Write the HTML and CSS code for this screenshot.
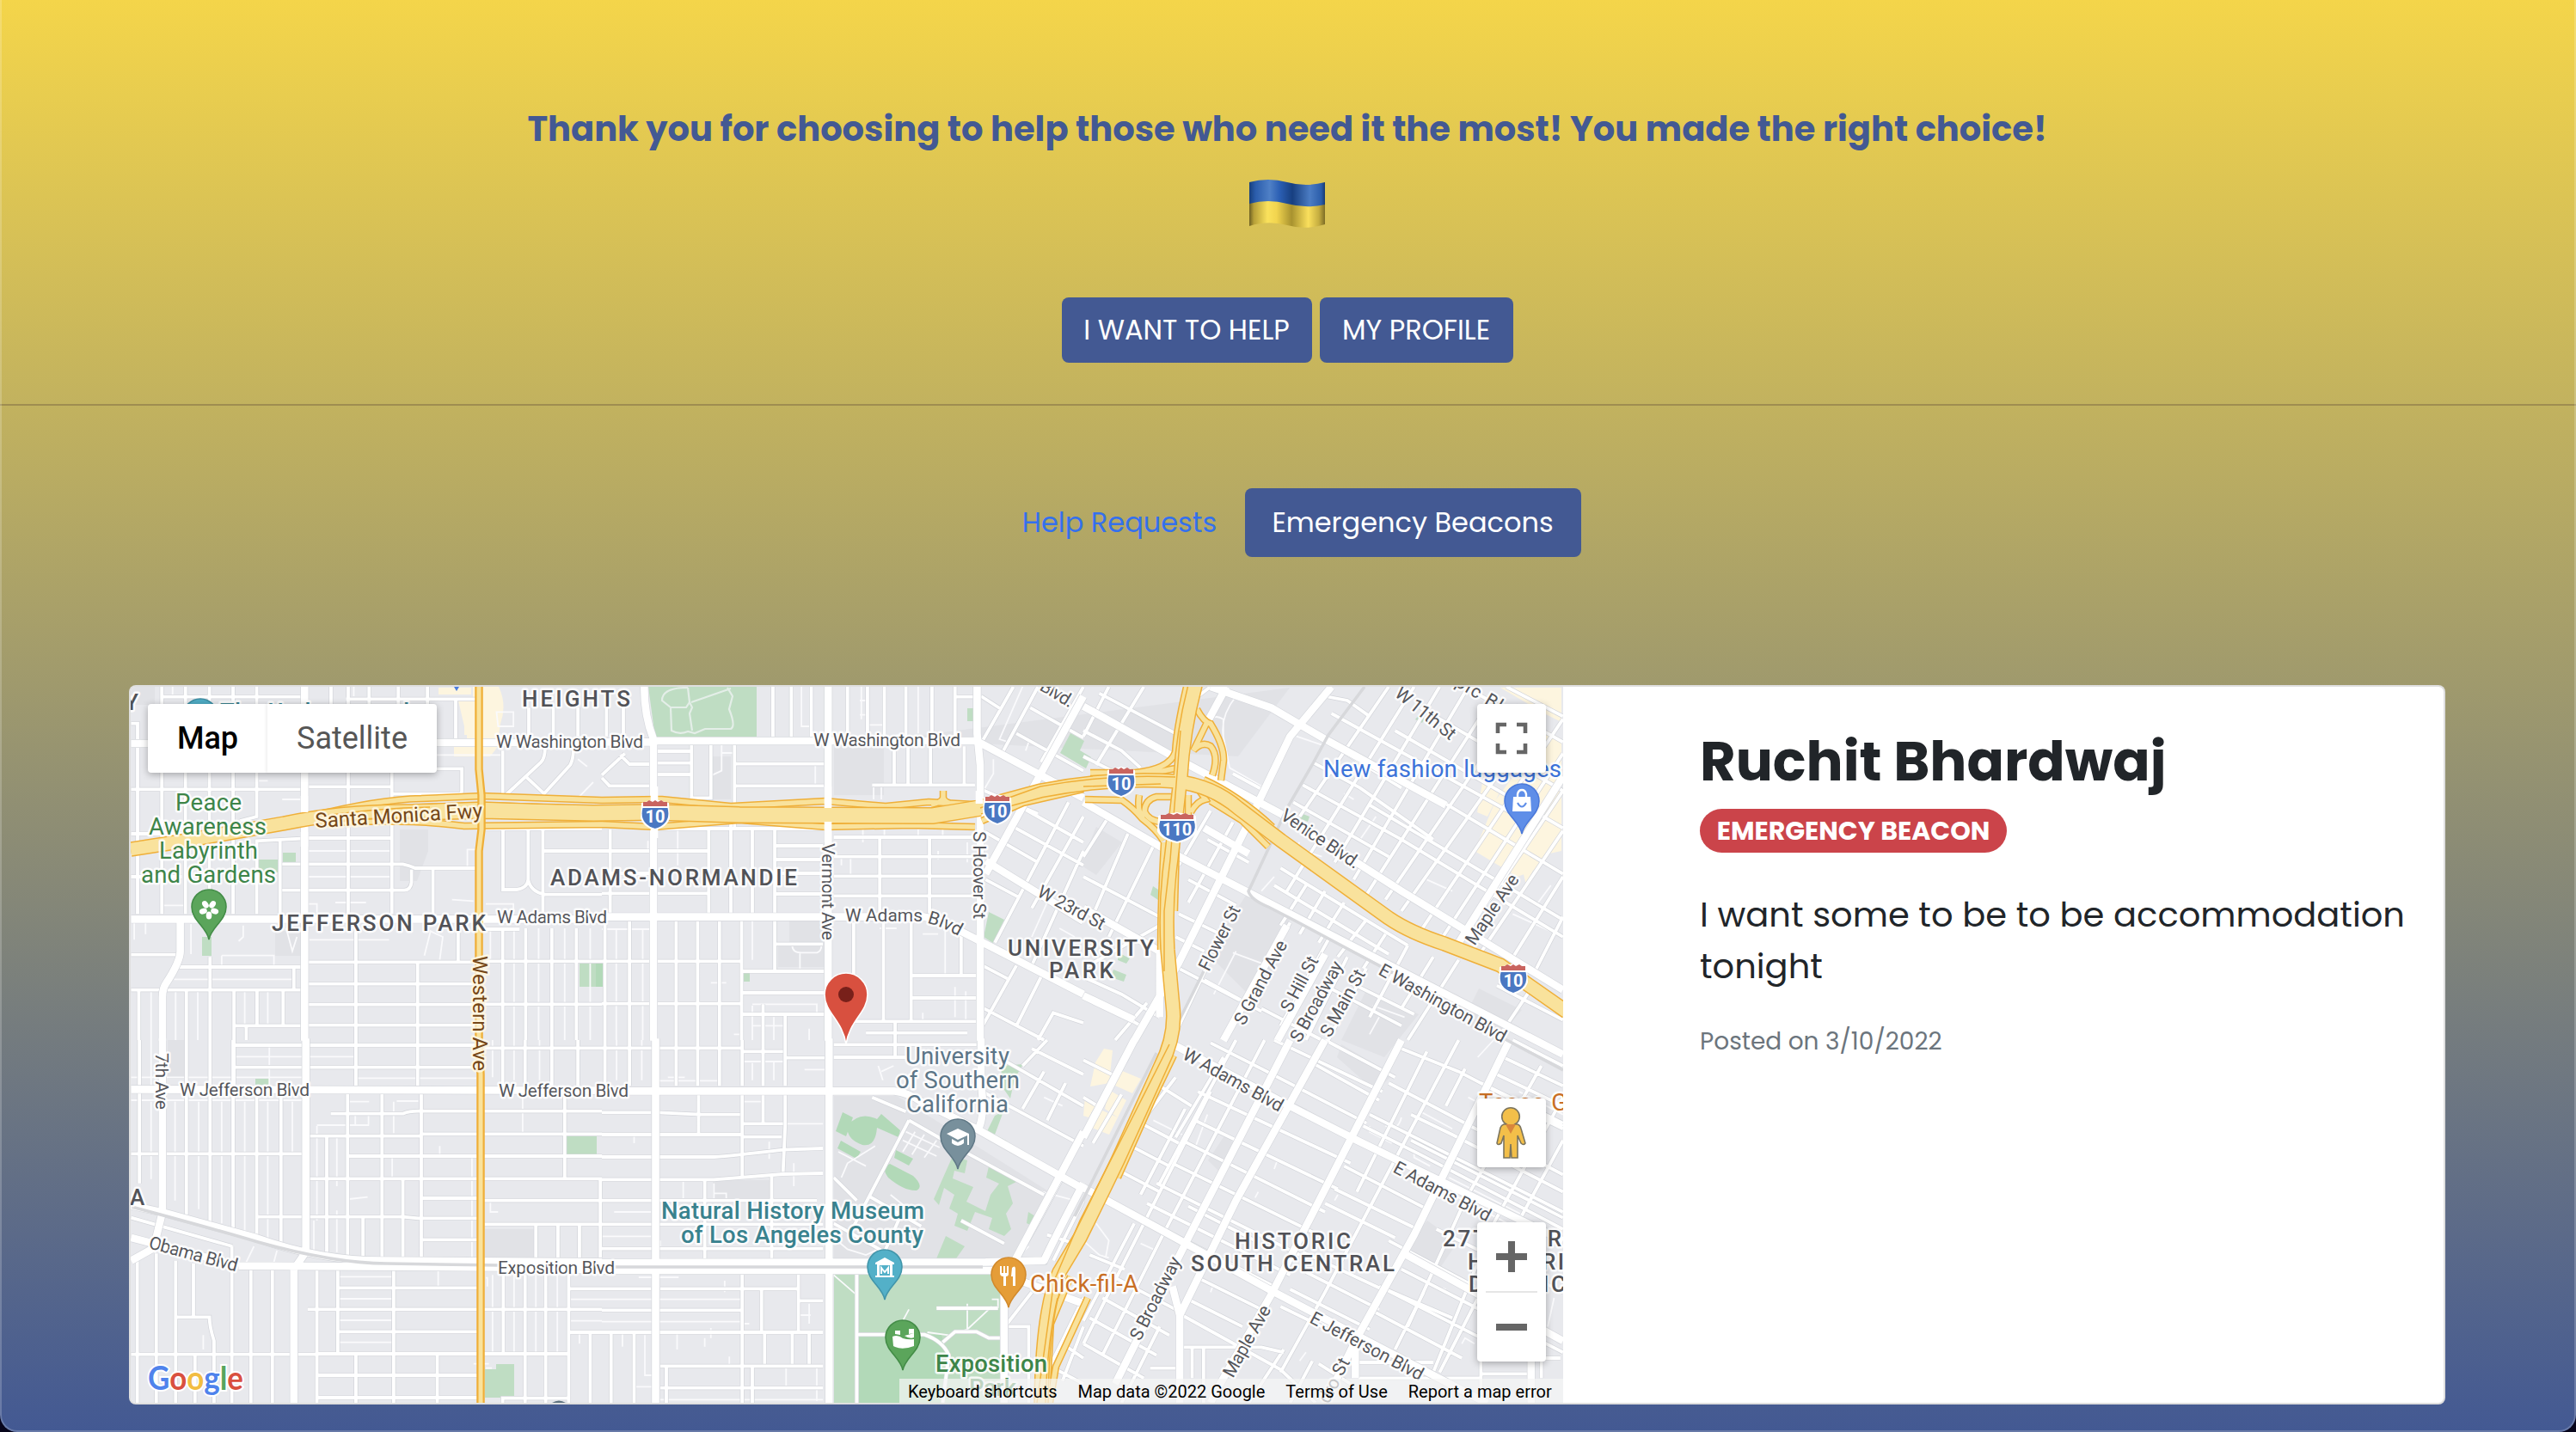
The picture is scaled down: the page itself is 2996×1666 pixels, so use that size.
FILE: index.html
```html
<!DOCTYPE html>
<html lang="en">
<head>
<meta charset="utf-8">
<title>Emergency Beacons</title>
<link rel="stylesheet" href="styles.css">
</head>
<body>
<main class="page">
  <header class="intro">
    <h1 class="thanks">Thank you for choosing to help those who need it the most! You made the right choice!</h1>
    <svg class="flag" viewBox="0 0 88 58" aria-label="Ukraine">
      <defs>
        <linearGradient id="blue"><stop offset="0" stop-color="#173f7c"/><stop offset=".08" stop-color="#2a5cab"/><stop offset=".27" stop-color="#4f80c6"/><stop offset=".4" stop-color="#2b5fb4"/><stop offset=".57" stop-color="#173f80"/><stop offset=".8" stop-color="#4b7cc3"/><stop offset=".95" stop-color="#2b5daa"/><stop offset="1" stop-color="#173a72"/></linearGradient>
        <linearGradient id="gold"><stop offset="0" stop-color="#6d5f22"/><stop offset=".06" stop-color="#b69f38"/><stop offset=".24" stop-color="#fae15c"/><stop offset=".36" stop-color="#f2d54f"/><stop offset=".56" stop-color="#a8922f"/><stop offset=".78" stop-color="#fadf5c"/><stop offset=".92" stop-color="#c5ad40"/><stop offset="1" stop-color="#7c6c26"/></linearGradient>
      </defs>
      <path fill="url(#gold)" d="M0 26Q22 20 44 27T88 28V52Q66 59 44 53T0 54Z"/>
      <path fill="url(#blue)" d="M0 3Q22-3 44 3T88 3V29Q66 34 44 28T0 28Z"/>
    </svg>
    <div class="actions">
      <a class="btn">I WANT TO HELP</a>
      <a class="btn btn-profile">MY PROFILE</a>
    </div>
  </header>
  <hr class="rule">
  <nav class="pills">
    <a class="pill">Help Requests</a>
    <a class="pill active">Emergency Beacons</a>
  </nav>
  <article class="card">
    <div class="map">
      <svg class="map-canvas" viewBox="152 799 1666 833">
        <defs>
          <g id="minor">
            <g transform="translate(140 790) scale(.35714 .33333)">
              <path d="M35 155H56V820M135 27V820M212 27V820M290 27V820M367 27V820M444 27V480L390 495M444 560V820M686 27V90M742 27V820M810 27V90M905 27V90M1000 27V90M884 320V820M135 62H600M735 70H1165M1092 70V210M35 385H600M610 376H885M885 401H1105Q1112 400 1112 390V313H1030M35 540H200M35 690H200M440 565L600 556M613 555H880M527 646H920Q940 650 960 660H1160M948 665V710Q945 735 925 737H527M520 565V820M1018 665V820M35 962H190M190 1005H600M565 1005V1085M35 1085H600M292 970V1260M60 1090V1260M215 1090V1260M370 1090V1260M445 1090V1210M530 1090V1210M375 1210H590M410 1210V1260M613 988H1160M613 1064H1160M613 1136H1160M613 1208H1160M767 880V1260M968 990V1260M1245 250V405H1255L1370 290Q1383 275 1383 240M1320 340L1380 400 1465 300Q1475 280 1475 250M1330 100V200M1410 100V200M1490 100V200M1185 523H1568M1246 525V735H1290Q1325 730 1328 700Q1335 740 1380 752H1568M1328 510V700M1376 525V830M1380 600H1568M1245 870V1260M1320 870V1260M1405 870V1260M1485 870V1260M1185 985H1568M1185 1135H1568M1185 873H1300M1100 870V985"/>
            </g>
            <g transform="translate(700 790) scale(.35714 .33333)">
              <path d="M70 100V200M15 100V200M557 27V205M617 27V205M682 27V205M800 27V205M865 27V205M920 27V205M990 27V205M1075 27V205M1150 27V205M1150 62H1215M180 252H290M180 293H290M180 333H290M292 230V415H355V230M432 230V520M435 296H725M435 373H725M20 373H160M0 345L25 373M0 335L75 260M60 265 90 297H160M952 240V370M997 235V370M1070 235V370M1180 235V370M880 370H1215M180 522H720M755 552H1215M565 582H720M565 630H720M755 620H1215M755 688H1215M755 757H1215M27 525V820M348 525V820M420 490V820M490 525V820M563 525V1015M0 600H345M0 678H160M0 748H345M565 678H720M565 750H720M905 555V825M1067 550V825M10 845V1260M90 845V1260M242 845V1260M312 845V1260M383 845V1260M0 985H455M0 1133H455M455 840V1260M565 925H720M460 1020H725M460 1095H725M460 1170H725M525 1135V1260M597 1175V1260M820 850V1040M917 850V1190M1007 850V1190M1010 1035H1220M1010 1113H1220M820 1195H1220M1170 880V1030M955 1200V1260M860 1235H1190M1235 60 1300 105M1340 27 1240 215M1420 27 1300 265M1395 100 1568 205M1350 190 1568 320M1370 450 1568 570M1330 510 1568 650M1250 535 1420 640M1520 430 1280 920M1568 480 1400 800M1250 700 1355 760M1568 600 1400 1000M1240 1000 1320 1045M1350 1000 1240 1210M1430 1040 1350 1210M1245 1150 1440 1260M1568 1200 1470 1165 1420 1260M1568 27 1430 290M1235 385 1420 470"/>
            </g>
            <g transform="translate(1260 790) scale(.36990 .33333)">
              <path d="M80 27 0 200M190 27 40 300M0 180 120 250 180 310M50 50 290 190M0 270 90 320M400 27 300 110M760 60 830 75 900 130M780 120 1400 500M740 200 1000 380M720 290 870 380 1100 560M690 370 1000 560 1508 900M660 430 960 620M980 180 1508 520M1060 100 1508 390M1200 27 1508 220M1330 27 1508 130M1010 350 1508 680M900 440 1508 840M960 27 680 480M1040 27 640 740M1120 27 790 640M1210 27 850 700M1290 60 880 770M1370 90 950 770M1440 120 1000 810M1508 140 1060 880M1508 260 1130 900M1508 390 1180 930M1508 530 1240 970M1508 690 1340 990M1508 830 1420 1020M470 330 570 390M0 690 240 830M80 480 0 620M140 540 20 850M230 560 80 900M0 1010 240 860M300 600 240 720M400 460 300 650M470 500 330 780M390 560 520 640M330 700 480 790M300 820 430 890M290 900 380 950M380 1050 560 1160M300 1010 490 1120M390 1000 280 1260M650 850 540 1070M700 720 620 860M760 740 680 890M820 780 740 920M890 840 800 970M950 890 880 1010M1020 930 900 1180M1100 970 1000 1150M620 660 1020 930M600 720 960 960M770 910 620 1210M830 970 700 1260M890 1010 770 1260M1180 980 1020 1260M560 1150 750 1260M760 1070 1000 1210M1300 1070 1508 1190M1420 1060 1300 1260M0 1040 120 1100 240 1180M40 1120 180 1210M200 1130 100 1260M840 1060 1040 1170"/>
            </g>
            <g transform="translate(140 1210) scale(.35714 .33333)">
              <path d="M35 620 365 720M62 0V500M215 0V610M292 0V635M367 0V665M444 190V685M523 190V705M35 397H600M375 95H1160M375 18H1160M767 0V160M968 0V160M370 0V160M685 257H920Q940 248 970 248H1568M615 335H975M980 328H1568M745 405H1568M615 484H1568M445 617H920L970 622H1165M980 697H1165M980 552H1165M740 185V755M852 185V760M980 185V760M920 490V760M672 340V745M790 620V760M1185 560H1560M1185 643H1560M1447 185V480M1353 645V760M1425 645V760M1495 645V760M1563 490V760M1185 28H1568M1245 0V160M1318 0V160M1405 0V160M1490 0V160M55 770V1266M117 745V1266M180 770V1266M238 780V967M180 967H290Q290 1000 305 1050V1266M363 720V1266M425 800V1266M495 800V1266M243 1100V1266M35 1097H640M640 800V1266M708 800V1090M890 800V1266M710 865H1165M610 940H1568M710 1018H1165M645 1095H1460M645 1170H1165M645 1248H1165M767 1095V1266M1032 1095V1266M1247 820V1095M1318 820V1266M1385 820V1266M1460 810V1266M1465 868H1568M1465 1020H1568M1530 1020V1266M1245 1266V1250H1460"/>
            </g>
            <g transform="translate(700 1210) scale(.35714 .33333)">
              <path d="M0 28H455M90 0V160M10 0V160M242 0V160M312 0V160M383 0V160M457 0V160M525 0V160M597 0V160M460 40H590M600 62H725M755 16H1220M755 60H1000M955 0V60M0 253H160M185 253 320 260H450M0 330H455M0 408H365Q420 405 590 383L720 378M0 487H365L590 468 720 465M315 190V325M457 190V475M525 190V290M460 292H590M597 190V300L590 460M460 338H585M0 560H700M335 487V770M553 475V770M0 643H720M0 728H720M457 810V1266M0 868H160M190 868H635M0 943H455M0 1020H720M640 810V1020M520 870V1020M640 910H720M30 1020V1266M105 1020V1266M190 1138H720M190 1214H720M530 1020V1130M620 1020V1130M675 1020V1130M210 1140V1266M490 1140V1266M1260 40 1568 230M1450 0 1370 90M1440 110 1370 240M1510 150 1450 280M1240 180 1568 370M1000 280 820 650M830 560 755 480M870 545 1040 650M1000 280 1130 360M1190 395 1440 540M1500 480 1430 620 1350 770M755 640 920 740M970 620 920 740M830 810V1266M835 1028H1050Q1110 1050 1130 1100L1110 1266M1090 936H1290M1110 1055 1150 1018H1220L1260 1040H1300M1325 1000H1390V1266M1400 880 1320 990M1450 680 1568 720M1568 560 1470 770M1568 900 1440 1180M1170 630 1310 710M1500 1060 1568 1110M1480 1150 1568 1200M1568 1000 1500 1190M1400 30 1568 120M880 200 990 250"/>
            </g>
            <g transform="translate(1260 1210) scale(.36990 .33333)">
              <path d="M290 130 180 290M240 160 340 230M180 290 300 360M150 370 270 440M120 460 240 530M320 240 180 540M400 180 90 860 0 1060M440 60 290 340M480 0 240 500M570 0 250 680 60 1100M0 70 90 120M0 200 60 240M140 60 30 260M120 190 30 360M400 10 560 100 890 290M430 100 700 250M360 180 840 430M350 280 800 520M310 350 760 600M280 430 720 670M230 500 680 750M200 570 650 820M600 0 940 180M720 80 930 210M760 0 980 130M1000 30 1180 110 1508 300M960 150 1508 470M900 260 1508 600M880 300 1060 400 1508 660M1030 260 1160 330 1508 530M1030 350 1508 620M820 440 1080 590M790 520 1050 660M760 570 980 690M1180 0 950 480 760 880 620 1160M1080 40 860 530M1440 90 1200 560 1020 1000M1508 200 1290 640 1100 1160M1508 350 1370 630M1200 100 1140 230M1250 150 1508 290M1110 660 1508 880M1000 800 1508 1090M960 700 1230 860M950 870 1250 1040M900 940 1190 1110M930 860 1160 970M1250 880 1120 1160M1070 880 980 1080M700 810 930 940M650 870 900 1010M620 930 860 1060M690 740 940 870M360 830 560 940M320 900 500 1000M310 960 620 1150 730 1266M100 830 290 940M60 900 270 1030M20 970 230 1100M0 1060 190 1180M160 640 0 980M20 750 130 800M330 580 540 700M180 620 600 860M240 1000 120 1266M315 1072H560L630 1090M342 1075V1180M378 1075V1266M210 1145H300M630 1080 520 1266M720 1120 650 1266M740 1130 840 1200M865 1125H1100M865 1180H1250M1250 1120V1266M1250 1165H1400M1440 1120V1180M1500 1110H1400M1350 0 1508 90M1320 60 1508 160M1300 120 1508 230M1270 180 1508 310"/>
            </g>
          </g>
          <g id="lanes">
            <g transform="translate(140 790) scale(.35714 .33333)">
              <path d="M170 27V60M760 27V60M613 600H880M613 690H880M615 910H875M527 420H590M140 790H210M330 965H500V1000M330 965V1000M175 1048H565M100 1090V1260M180 1090V1260M252 1090V1260M405 1090V1210M480 1090V1210M1160 595H1130V655M1225 115H1280V165H1230ZM1245 265H1030M1490 415 1540 360M1190 785H1280V820M1080 770 1150 775M700 780H800M610 785H640V815M1205 870V985M1282 870V1260M1362 870V1260M1447 870V1260M1530 870V1260M1490 280 1520 305M45 850V910M82 850V890M230 855V960M400 860V900L385 915M540 870 560 950 575 900M990 965 1010 880 1050 900 1040 980M450 355H480"/>
            </g>
            <g transform="translate(700 790) scale(.35714 .33333)">
              <path d="M650 27V165H680M845 27V140M840 75H860M840 125H860M865 160H920M1030 27V190M390 230V320L360 335M390 258H430M247 525V650M150 565V600M695 300V365M885 375V420M910 375V420M850 525V570M920 525V550M1030 525V550M1110 525V550M810 625V680M780 625V650M1190 570V640M1095 600V630M47 870V1260M133 870V1260M0 873H160M355 1060H405M382 1040V1080M490 840V980M620 930Q620 955 650 955H700Q715 950 715 930M645 955V1010M1118 880V1030M905 870H960M1045 890H1095M490 1135H700V1165M490 1140V1260M560 1180V1260M490 1210H590M430 1240H450M675 1220V1260M1150 1075V1180M1185 1090V1190M1045 1165V1200M1370 27 1295 210 1325 220M1275 280V330L1245 385M1380 250 1390 220M1450 780 1400 900M1490 870 1540 900"/>
            </g>
            <g transform="translate(1260 790) scale(.36990 .33333)">
              <path d="M400 150Q410 120 440 140V200M480 60Q430 130 440 200L460 310 570 380M750 230 670 200M820 400 850 420M920 480 870 560M680 570Q660 590 750 620M1160 740 1080 700M1470 720 1430 780M480 950 410 1100M470 955 580 1000M910 1140 1010 1180M930 1180 900 1240M560 740 600 690M1350 820 1508 900M1100 900 1130 890"/>
            </g>
            <g transform="translate(140 1210) scale(.35714 .33333)">
              <path d="M35 130H600M35 210H600M100 0V160M100 215V485M178 215V560M255 215V590M330 215V640M405 215V665M480 215V690M560 215V400M375 58H760M485 25V160M630 630V740M705 340V510M705 595V740M640 300V630M640 297H810M765 260V295M808 260V295M740 215H810M890 215V325M900 213H970M885 410V480M770 133H1160M745 555 805 548M1145 410V760M1205 565V600H1230M1310 185V325M1212 0V130M1282 0V140M1365 0V140M1040 370V400M435 720 410 775M510 735 500 775M710 826H885M710 903H885M710 978H885M710 1055H885M1035 800V860M1212 820V1100M1282 820V1095M1353 820V1095M1423 820V1095M1190 830H1195V860M270 1030V1080M1465 905H1568M1465 980H1568M1495 1025V1060M1150 1130H1200M1190 1145H1210"/>
            </g>
            <g transform="translate(700 1210) scale(.35714 .33333)">
              <path d="M48 0V140M130 0V140M185 142H380M215 130H270M490 80V140M560 75V140M460 75H590M660 103H725M595 292H720M460 215H525M545 355V415M625 430V510M265 490V560M105 330V360M40 600H160M0 685H160M365 500V560M365 535H405V560M545 600H680M190 700V725M120 828H250M400 840V880M0 905H455M0 983H455M67 1025V1070M140 1030V1170H165M245 1025V1080M355 1005V1040M335 1040V1070M415 1105V1135M675 920V990M645 960H680M450 990H480M105 1210H165V1180M700 1140V1260M770 390 860 440M890 370 800 430 780 480M1020 320 980 390M1050 330 1010 400M1090 350 1050 410M990 320 1100 375M980 350 1090 405M940 540 1010 600M755 690 800 730 860 750 900 730M980 980 1000 940M1060 1020 1130 1030 1190 1010M1190 920V1010L1270 930M1270 905H1290V935M910 110 950 90M900 90 915 140M1440 200 1500 230M1540 560 1400 520M1390 720 1350 760M1420 840 1490 870M755 820 830 890M190 1255H720M600 1140V1210"/>
            </g>
            <g transform="translate(1260 1210) scale(.36990 .33333)">
              <path d="M390 260 350 380M220 280 310 330M1060 250 1160 310M1000 270Q990 320 950 300M900 300V320L970 360M1040 380V410L1090 440M1240 60 1290 0M1370 180 1508 260M1210 200 1330 270M1180 440 1400 560M1150 480 1380 610M1130 520 1350 650M1220 490V510M550 530 540 550M610 420 600 450M800 540 790 560M40 640 80 700 70 760M0 700 50 750 80 760M180 710 220 730M410 850 400 880M700 1090 680 1120M1190 1060 1200 1040 1230 1060M1480 900 1460 1000M1100 860 1140 870M740 980 830 1030"/>
            </g>
          </g>
          <g id="major">
            <g transform="translate(140 790) scale(.35714 .33333)">
              <path d="M600 27V1262M35 225H100M1020 222H1568M35 838H1568M195 850V950Q195 985 150 1060Q137 1080 137 1110V1262"/>
            </g>
            <g transform="translate(700 790) scale(.35714 .33333)">
              <path d="M0 220H165M138 27Q138 130 168 210V1262M737 27V1262M1222 27V190L1232 300V1262M165 216H1220L1568 415M0 830H1050Q1110 840 1150 870L1568 1100M1568 60 1250 680M1250 635 1568 845"/>
            </g>
            <g transform="translate(1260 790) scale(.36990 .33333)">
              <path d="M0 95 290 275 620 470 1000 740 1508 1085M0 430 250 590 510 740 1000 1020 1508 1310M400 27 590 100 760 210 1140 440M780 27 650 200 520 500 300 990 160 1262M450 27 390 150M0 800 240 950V1180M0 1105 160 1190M1508 340 1180 920M760 960 610 1262M640 860 440 1262M380 520 520 610"/>
            </g>
            <g transform="translate(140 1210) scale(.35714 .33333)">
              <path d="M35 172 1568 176M137-5V600L105 740M604-5V740L565 800V1268M35 577 140 602 440 690Q650 770 850 770L1568 775M385 788 1230 793 1568 803M35 690 180 730 385 788M35 770 110 725"/>
            </g>
            <g transform="translate(700 1210) scale(.35714 .33333)">
              <path d="M175-5V1268M740-5V1268M0 178H950Q1000 185 1040 215L1220 310 1568 520M1235-5V150Q1250 280 1220 320M1568 320 1320 820 1310 890V1268M0 777 1250 775 1440 770Q1470 700 1568 500M0 804H1270L1568 920"/>
            </g>
            <g transform="translate(1260 1210) scale(.36990 .33333)">
              <path d="M290 20 640 225 860 350 1508 700M0 515 240 660 600 880 1100 1170 1270 1268M1000 0 700 650 590 890 430 1200 400 1266M1340 0 1040 680 860 1040 760 1266M760 0 480 560 303 960V1268M650 0 330 690 100 1200M1000 740 1508 1050M303 960 280 860M855 1050V1180M1408 1120V1268M0 340 160 0"/>
            </g>
          </g>
          <g id="freeway">
            <path d="M152 988 210 979 330 958Q400 943 480 944L561 941 690 946 760 945 860 948 1085 949 1140 939 1210 920Q1290 904 1367 909Q1410 914 1440 940L1490 978 1615 1068Q1640 1085 1680 1098L1745 1123 1822 1177"/>
            <path d="M1391 794Q1376 850 1373 905L1362 1000Q1355 1050 1358 1105L1364 1170Q1368 1205 1350 1240L1300 1350Q1276 1400 1256 1440L1232 1480Q1212 1525 1211 1634"/>
          </g>
          <path id="freeway-core" d="M480 945 561 943 690 946 760 945 860 948 1085 949 1140 940"/>
          <g id="ramps">
            <path d="M360 950Q440 930 490 929L561 926 700 931 770 930 850 938 960 932 1030 938 1080 933 1134 936M380 958Q470 952 540 961L700 959 762 962 860 954 960 962 1060 960 1134 962M1142 955 1190 934 1260 918M1097 920V928Q1095 934 1083 936M1097 928Q1098 934 1112 936"/>
            <path d="M1392 825Q1400 840 1408 842Q1424 868 1423 885L1420 908M1405 838 1388 873Q1398 862 1408 868Q1418 880 1410 902M1380 799Q1368 850 1367 875Q1360 895 1320 899L1268 899M1375 893Q1350 896 1330 904M1262 930 1305 931Q1318 940 1328 952Q1345 965 1353 978M1362 927H1345Q1332 930 1331 944Q1336 955 1350 956M1325 925Q1322 945 1330 952M1385 945Q1392 932 1402 930L1395 920M1382 925V950M1400 907Q1440 925 1480 962M1408 932 1445 955 1475 985M1354 980Q1350 1050 1350 1105M1368 985 1366 1060M1640 1087 1700 1102 1740 1118M1365 1228 1340 1280 1322 1312M1340 1280 1300 1370M1265 1510 1228 1590 1221 1632M1245 1485 1222 1540 1217 1632"/>
          </g>
          <path id="pin" d="M0 0C-3-15-20-22-20-38A20 20 0 0 1 20-38C20-22 3-15 0 0Z"/>
          <g id="shield">
            <path fill="#fff" d="M-16-14 0-18 16-14 17 4Q14 14 0 18Q-14 14-17 4Z"/>
            <path fill="#4a78c2" d="M-14.5-8H14.5Q19 10 0 16Q-19 10-14.5-8Z"/>
            <path fill="#c9645f" d="M-14-10V-15L-10-15-7-17-3-15 0-17 3-15 7-17 10-15 14-15V-10Z"/>
          </g>
        </defs>

        <rect class="land" x="150" y="797" width="1670" height="837"/>
        <path class="block" d="M970 865H1028V925H970ZM1035 860 1500 800 1440 880ZM829 880H850V930H829ZM918 1070H960V1125H905V1100H918ZM970 1275H1043L1218 1385 1182 1467H970ZM1450 1040 1500 1070 1465 1170 1405 1110ZM564 1430H622V1465H564ZM829 1373H895V1395H829ZM465 965H498V990L485 1025H465ZM1590 1150 1650 1180 1610 1230 1560 1210ZM1560 1215 1620 1250 1600 1270 1555 1230ZM1720 1150 1770 1175 1740 1210 1700 1190ZM1660 1420 1695 1445 1675 1475 1635 1450ZM320 1083H350V1112H320ZM195 1210H217V1255H195ZM1425 1320 1440 1335 1420 1365 1405 1350ZM1275 962 1305 980 1275 1018 1256 1006ZM152 799H180V820H152Z"/>
        <path class="park" d="M754 799H880V858H762ZM1245 853 1261 862 1256 873 1269 881 1263 894 1233 876ZM1150 1061 1168 1070 1155 1097 1144 1090ZM300 1000H326V1015H300ZM329 992H344V1003H329ZM235 1090H246V1112H235ZM674 1120H704V1148H674ZM659 1322H694V1343H659ZM864 1132H872V1142H864ZM1125 824H1132V839H1125ZM297 1255H313V1262H297ZM564 1593H577V1587H598V1626H564ZM970 1482H1163V1632H970ZM1164 1240 1190 1238 1180 1255 1175 1278 1166 1265ZM1295 1128 1310 1134 1307 1142 1292 1137ZM1300 1108 1314 1115 1310 1121 1300 1117ZM1341 1031 1347 1035V1047L1338 1041ZM1513 946 1523 950 1521 956 1512 952ZM1650 832 1657 836 1654 841 1646 837ZM1100 1438 1122 1450 1110 1467H1088ZM1196 1410 1204 1415 1198 1425 1194 1423ZM1157 1298 1167 1293 1157 1320 1172 1328 1160 1324 1148 1316Z"/>
        <path class="park-dark" d="M980 1294 992 1300 984 1322 972 1316ZM985 1310Q1000 1292 1020 1302L1025 1296 1047 1315 1045 1323 1020 1312Q1018 1335 1003 1332Q985 1326 985 1310ZM978 1327 1001 1340 996 1348 974 1336ZM1042 1338 1062 1348 1057 1356 1040 1347ZM1035 1354 1062 1368Q1075 1380 1066 1385Q1052 1386 1033 1370Q1024 1358 1035 1354ZM998 1553H1095Q1110 1600 1095 1632H998ZM693 1120H704V1148H693Z"/>
        <path class="park" d="M1108 1345 1125 1350 1122 1365 1110 1362 1108 1371 1132 1381 1124 1398 1146 1409 1152 1390 1162 1377 1147 1370 1150 1357 1168 1364 1182 1375 1172 1380 1178 1400 1170 1412 1176 1430 1168 1438 1150 1430 1154 1417 1134 1410 1125 1432 1110 1426 1114 1412 1104 1406 1110 1390 1098 1382 1092 1402 1086 1395 1096 1372Z"/>
        <path class="shops" d="M510 800H548V808H510ZM533 815H550V799H580Q590 820 582 842L578 870 570 880H528V868H543V855H540V845ZM1745 800H1816V840L1796 830ZM1800 850 1816 860V960L1790 1010 1765 1020 1715 990 1740 930ZM1725 905 1745 920 1730 950 1718 945ZM1780 930 1816 870V990L1770 1000ZM1768 1000 1785 1008 1775 1030ZM1284 1220 1294 1222 1290 1260 1268 1264 1274 1236ZM1303 1245 1327 1255 1317 1272 1297 1263ZM1290 1268 1310 1280 1300 1300 1285 1290ZM1262 1275 1275 1285 1266 1300 1260 1298ZM1273 1288 1300 1300 1290 1320 1270 1312Z"/>

        <use href="#lanes" class="road lane"/>
        <use href="#minor" class="road casing"/>
        <use href="#minor" class="road street"/>
        <use href="#major" class="road casing-wide"/>
        <use href="#major" class="road avenue"/>
        <path class="park-path" d="M800 800Q770 800 770 815L780 823H798L802 817 805 823 802 830 805 850M780 823 781 850Q790 855 800 851L808 853 820 848H850Q856 845 848 825L852 810 846 800M802 817 800 800M804 817 850 801"/>
        <path class="rail" d="M1587 799 1545 855 1526 890 1497 940 1474 990 1452 1037Q1455 1047 1475 1055L1504 1070 1620 1132M1400 1130 1371 1188M1745 1206 1818 1245M153 1404Q250 1430 300 1445Q390 1470 450 1470L580 1472M715 1474H1143M1345 1225 1250 1415"/>
        <use href="#ramps" class="road ramp-edge"/>
        <use href="#ramps" class="road ramp-fill"/>
        <use href="#freeway" class="road freeway-edge"/>
        <use href="#freeway-core" class="road core-edge"/>
        <use href="#freeway" class="road freeway-fill"/>
        <use href="#freeway-core" class="road core-fill"/>
        <path class="road divider" d="M370 950Q440 940 500 939M370 957Q440 950 500 951M1140 940 1210 915Q1290 900 1367 904M1260 915 1350 912M1373 850 1361 1000 1354 1060 1354 1130M1360 1215 1312 1310 1256 1420 1226 1490 1206 1632M1230 1510Q1218 1560 1216 1632"/>
        <path class="road artery-edge" d="M557 799V895L560 925V965L557 990V1210L559 1250V1632"/>
        <path class="road artery-fill" d="M557 799V895L560 925V965L557 990V1210L559 1250V1632"/>
        <path class="road avenue" d="M761 915V934M761 961V975M963 915V940M963 956V980M354 926V945M1139 920V935M354 968V985"/>

        <g class="labels street-name">
          <text x="577" y="870" textLength="171">W Washington Blvd</text>
          <text x="946" y="868" textLength="171">W Washington Blvd</text>
          <text x="578" y="1074" textLength="128">W Adams Blvd</text>
          <path id="adams" fill="none" stroke="none" d="M983 1072H1068Q1090 1074 1120 1092"/>
          <text><textPath href="#adams">W Adams Blvd</textPath></text>
          <text x="209" y="1275" textLength="151">W Jefferson Blvd</text>
          <text x="580" y="1276" textLength="151">W Jefferson Blvd</text>
          <text x="579" y="1482" textLength="136">Exposition Blvd</text>
          <text transform="translate(172 1452) rotate(15)" textLength="106">Obama Blvd</text>
          <text transform="translate(956 981) rotate(90)" textLength="113">Vermont Ave</text>
          <text transform="translate(1132 967) rotate(90)" textLength="102">S Hoover St</text>
          <text transform="translate(181 1225) rotate(90)" textLength="66">7th Ave</text>
          <text transform="translate(1205 1042) rotate(28)" textLength="86">W 23rd St</text>
          <text transform="translate(1208 802) rotate(31)" textLength="42">Blvd.</text>
          <text transform="translate(1621 809) rotate(39)" textLength="84">W 11th St</text>
          <text transform="translate(1674 787) rotate(31)" textLength="80">mpic Bl</text>
          <text transform="translate(1488 952) rotate(34)" textLength="106">Venice Blvd.</text>
          <text transform="translate(1715 1101) rotate(-56)" textLength="94">Maple Ave</text>
          <text transform="translate(1406 1131) rotate(-63)" textLength="82">Flower St</text>
          <text transform="translate(1447 1194) rotate(-62)" textLength="108">S Grand Ave</text>
          <text transform="translate(1501 1179) rotate(-62)" textLength="70">S Hill St</text>
          <text transform="translate(1512 1214) rotate(-61)" textLength="104">S Broadway</text>
          <text transform="translate(1547 1208) rotate(-61)" textLength="86">S Main St</text>
          <text transform="translate(1602 1133) rotate(29)" textLength="166">E Washington Blvd</text>
          <text transform="translate(1374 1231) rotate(29)" textLength="130">W Adams Blvd</text>
          <text transform="translate(1619 1363) rotate(28)" textLength="125">E Adams Blvd</text>
          <text transform="translate(1522 1538) rotate(28)" textLength="146">E Jefferson Blvd</text>
          <text transform="translate(1326 1561) rotate(-63)" textLength="106">S Broadway</text>
          <text transform="translate(1434 1604) rotate(-61)" textLength="92">Maple Ave</text>
          <text transform="translate(1561 1602) rotate(-62)" textLength="20">St</text>
          <text transform="translate(1545 1634) rotate(-62)" textLength="30">dro</text>
        </g>
        <g class="labels highway-name">
          <text transform="translate(367 963) rotate(-3.5)" textLength="195">Santa Monica Fwy</text>
          <text transform="translate(550 1112) rotate(90)" textLength="134">Western Ave</text>
        </g>
        <g class="labels district">
          <text x="607" y="822" textLength="126">HEIGHTS</text>
          <text x="316" y="1083" textLength="249">JEFFERSON PARK</text>
          <text x="640" y="1030" textLength="287">ADAMS-NORMANDIE</text>
          <text x="1172" y="1112" textLength="170">UNIVERSITY</text>
          <text x="1220" y="1138" textLength="75">PARK</text>
          <text x="1436" y="1453" textLength="135">HISTORIC</text>
          <text x="1385" y="1479" textLength="237">SOUTH CENTRAL</text>
          <text x="1678" y="1450" textLength="138">27TH STR</text>
          <text x="1707" y="1477" textLength="112">HISTORI</text>
          <text x="1708" y="1503" textLength="113">DISTRIC</text>
          <text x="145" y="826">Y</text>
          <text x="151" y="1402">A</text>
        </g>
        <g class="labels poi">
          <g fill="#3d8549">
            <text x="204" y="943" textLength="77">Peace</text><text x="173" y="971" textLength="137">Awareness</text>
            <text x="185" y="999" textLength="115">Labyrinth</text><text x="164" y="1027" textLength="157">and Gardens</text>
            <text class="strong" x="1088" y="1596" textLength="130">Exposition</text><text class="strong" x="1127" y="1624" textLength="55">Park</text>
          </g>
          <g fill="#5c7587"><text x="1053" y="1238" textLength="121">University</text><text x="1042" y="1266" textLength="144">of Southern</text><text x="1054" y="1294" textLength="119">California</text></g>
          <g fill="#39828e" class="strong"><text x="769" y="1418" textLength="306">Natural History Museum</text><text x="792" y="1446" textLength="282">of Los Angeles County</text><text x="256" y="838" textLength="220">The Underground</text></g>
          <text fill="#3c73d9" x="1539" y="904" textLength="277">New fashion luggages</text>
          <text fill="#c96f24" x="1198" y="1503" textLength="126">Chick-fil-A</text>
          <text fill="#c96f24" x="1720" y="1292" textLength="103">Tacos G</text>
        </g>

        <g transform="translate(762 948)"><use href="#shield"/><text class="route" y="9">10</text></g>
        <g transform="translate(1160 942)"><use href="#shield"/><text class="route" y="9">10</text></g>
        <g transform="translate(1304 910)"><use href="#shield"/><text class="route" y="9">10</text></g>
        <g transform="translate(1760 1139)"><use href="#shield"/><text class="route" y="9">10</text></g>
        <g transform="translate(1369 963)"><use href="#shield" transform="scale(1.36 1)"/><text class="route" y="9">110</text></g>

        <use href="#pin" x="233" y="871" class="marker" fill="#4fabc4" stroke="#3d8ea3"/>
        <path fill="#4a7de0" d="M528 799H534L531 804Z"/>
        <path fill="#607480" d="M642 1632Q650 1627 658 1632Z"/>
        <g transform="translate(243 1093)"><use href="#pin" class="marker" fill="#5ba55b" stroke="#438c47"/>
          <g fill="#fff" transform="translate(0 -35)"><ellipse id="petal" cy="7" rx="3.3" ry="4.6"/><use href="#petal" transform="rotate(72)"/><use href="#petal" transform="rotate(144)"/><use href="#petal" transform="rotate(216)"/><use href="#petal" transform="rotate(288)"/></g></g>
        <g transform="translate(1770 970)"><use href="#pin" class="marker" fill="#5f8ee8" stroke="#4c7adb"/>
          <path fill="#fff" d="M-10-43H10L11-26H-11Z"/><path fill="none" stroke="#fff" stroke-width="2.4" d="M-5-43V-46Q-4-51 0-51T5-46V-43"/><path fill="none" stroke="#5f8ee8" stroke-width="2.2" d="M-5-36Q0-27 5-36"/></g>
        <g transform="translate(1114 1360)"><use href="#pin" class="marker" fill="#78909c" stroke="#617987"/>
          <path fill="#fff" d="M-13-41 0-47 13-41V-28H11V-39L0-34ZM-7-35 0-31 7-35V-30Q0-24-7-30Z"/></g>
        <g transform="translate(1029 1512)"><use href="#pin" class="marker" fill="#53b0c8" stroke="#4295aa"/>
          <path fill="#fff" d="M-11-43 0-49 11-43V-41H9V-28H11V-26H-11V-28H-9V-41H-11ZM-6-40V-28H6V-40Z" fill-rule="evenodd"/><path fill="none" stroke="#fff" stroke-width="2" d="M-4-30V-37L0-32 4-37V-30"/></g>
        <g transform="translate(1173 1521)"><use href="#pin" class="marker" fill="#e59d38" stroke="#d28a2c"/>
          <path fill="#fff" d="M-10-48H-8V-40H-6V-48H-4V-40H-2V-48H0V-39Q0-36-3-36V-25H-6V-36Q-10-36-10-40ZM4-46Q8-50 8-44V-25H5V-36H3Z"/></g>
        <g transform="translate(1050 1594)"><use href="#pin" class="marker" fill="#5ba55b" stroke="#438c47"/>
          <path fill="#fff" d="M-12-39Q-6-42 0-37 6-35 13-36V-28Q0-23-9-27L-11-28ZM-9-46H-3V-41L-9-42ZM7-48H13V-43L7-42ZM2-40 13-43V-38Q8-36 2-40Z"/></g>
        <path class="beacon" d="M984 1215C980 1187 959 1178 959 1157A25 25 0 0 1 1009 1157C1009 1178 988 1187 984 1215Z"/>
        <circle cx="984" cy="1157" r="9" fill="#78201a"/>
        <text class="google" x="172" y="1617" textLength="111" lengthAdjust="spacingAndGlyphs"><tspan fill="#4f83ec">G</tspan><tspan fill="#d9503f">o</tspan><tspan fill="#f2bd42">o</tspan><tspan fill="#4f83ec">g</tspan><tspan fill="#58a55c">l</tspan><tspan fill="#d9503f">e</tspan></text>
      </svg>
      <div class="map-type"><span class="type-map">Map</span><span class="type-sat">Satellite</span></div>
      <div class="control fullscreen"><svg viewBox="0 0 80 80"><path fill="none" stroke="#666" stroke-width="4.6" d="M24 34V24H34M46 24H56V34M56 46V56H46M34 56H24V46"/></svg></div>
      <div class="control pegman"><svg viewBox="0 0 80 80"><g stroke="#7c755e" stroke-width="1.6" fill="#f3bf49"><path d="M31 30H47Q50 31 51 35L56 52Q54 55 51 52L47 43V69H40L39 53 38 69H31V43L28 52Q24 55 23 52L27 34Q28 31 31 30Z"/><circle cx="39" cy="21" r="10.3"/></g><path fill="#d9863c" d="M33 30H45L39 41Z"/></svg></div>
      <div class="control zoom"><svg viewBox="0 0 80 162"><path fill="#666" d="M36 22H44V36H58V44H44V58H36V44H22V36H36ZM22 118H58V126H22Z"/><path fill="#e6e6e6" d="M10 80H70V82H10Z"/></svg></div>
      <div class="legal"><span>Keyboard shortcuts</span><span>Map data ©2022 Google</span><span>Terms of Use</span><span>Report a map error</span></div>
    </div>
    <section class="details">
      <h2 class="name">Ruchit Bhardwaj</h2>
      <div class="badge">EMERGENCY BEACON</div>
      <p class="message">I want some to be to be accommodation tonight</p>
      <p class="posted">Posted on 3/10/2022</p>
    </section>
  </article>
</main>
</body>
</html>
```
FILE: styles.css
```css
* { box-sizing: border-box; }
body { margin: 0; background: #07051b; font-family: Poppins, Inter, sans-serif; color: #212529; }
h1, h2, p { margin: 0; }
.page {
  position: relative;
  height: 1666px;
  display: flex;
  flex-direction: column;
  background: linear-gradient(#f4d54a, #435993);
  border-radius: 0 0 20px 20px;
  overflow: hidden;
}
.page::after {
  content: "";
  position: absolute;
  inset: 0;
  border: 2px solid rgba(255, 255, 255, .2);
  border-top: 0;
  border-radius: 0 0 20px 20px;
  pointer-events: none;
}
.intro { display: flex; flex-direction: column; align-items: center; padding: 120px 2px 0 0; }
.thanks { color: #435993; font-size: 40px; line-height: 60px; font-weight: 700; white-space: nowrap; }
.flag { width: 88px; height: 58px; margin-top: 29px; display: block; }
.actions { display: flex; gap: 9px; margin-top: 79px; }
.btn { height: 76px; width: 291px; border-radius: 8px; background: #435993; color: #fff; display: flex; align-items: center; justify-content: center; font-size: 32px; white-space: nowrap; }
.btn-profile { width: 225px; }
.rule { width: 100%; height: 2px; margin: 48px 0 0; border: 0; background: #9f8d50; }
.pills { display: flex; justify-content: center; margin-top: 96px; padding-right: 1px; }
.pill { height: 80px; padding: 0 32px; display: flex; align-items: center; justify-content: center; font-size: 32px; color: #3470ed; border-radius: 8px; white-space: nowrap; width: 291px; }
.pill.active { background: #435993; color: #fff; width: 391px; }
.card { width: 2694px; height: 837px; margin: 149px 0 0 150px; display: flex; background: #fff; border: 2px solid rgba(0, 0, 0, .125); border-radius: 8px; overflow: hidden; }
.details { flex: 1; padding: 45px 0 0 159px; }
.name { font-size: 64px; line-height: 84px; font-weight: 700; white-space: nowrap; }
.badge { width: 357px; height: 51px; margin-top: 13px; border-radius: 26px; background: #cb444a; color: #fff; font-size: 30px; font-weight: 700; display: flex; align-items: center; justify-content: center; white-space: nowrap; }
.message { margin-top: 42px; font-size: 40px; line-height: 60px; width: 840px; }
.posted { margin-top: 37px; font-size: 28px; line-height: 42px; color: #6c757d; }

.map { position: relative; width: 1666px; flex: none; font-family: Roboto, sans-serif; }
.map-canvas { display: block; width: 1666px; height: 833px; }
.map-canvas path { vector-effect: non-scaling-stroke; }
.land { fill: #e8e9ed; }
.block { fill: #e1e2e6; }
.park { fill: #bfddc3; }
.park-dark { fill: #b2d9b8; }
.shops { fill: #fdf5df; }
.road { fill: none; }
.lane { stroke: #fafafc; stroke-width: 1.8px; }
.casing { stroke: #d3d5da; stroke-width: 5.2px; }
.street { stroke: #fff; stroke-width: 3.8px; }
.casing-wide { stroke: #d6d8dd; stroke-width: 10px; }
.avenue { stroke: #fff; stroke-width: 8.6px; stroke-linejoin: round; }
.park-path { fill: none; stroke: #e4eee8; stroke-width: 2.2px; }
.rail { fill: none; stroke: #d7d8db; stroke-width: 3.5px; }
.ramp-edge { stroke: #efaf38; stroke-width: 8.5px; }
.ramp-fill { stroke: #f9e29c; stroke-width: 5.5px; }
.freeway-edge { stroke: #efaf38; stroke-width: 17.5px; }
.freeway-fill { stroke: #f9e29c; stroke-width: 14.5px; }
.core-edge { stroke: #efaf38; stroke-width: 20px; }
.core-fill { stroke: #f9e29c; stroke-width: 17px; }
.divider { stroke: #efaf38; stroke-width: 1.5px; }
.artery-edge { stroke: #efaf38; stroke-width: 9.5px; }
.artery-fill { stroke: #f9e29c; stroke-width: 5px; }
.labels text { paint-order: stroke; stroke: rgba(255, 255, 255, .85); stroke-width: 5px; stroke-linejoin: round; }
.street-name { fill: #55565b; font-size: 21px; }
.highway-name { fill: #754717; font-size: 24px; }
.highway-name text { stroke: rgba(255, 248, 228, .9); }
.district { fill: #515257; font-size: 26px; font-weight: 500; }
.poi { font-size: 27.5px; }
.strong { font-weight: 500; }
.route { fill: #fff; font-size: 20px; font-weight: 700; text-anchor: middle; }
.marker { stroke-width: 1.6px; }
.beacon { fill: #d8503f; stroke: #fff; stroke-width: 1.6px; }
.google { font-family: Lato, sans-serif; font-size: 38px; font-weight: 700; paint-order: stroke; stroke: #fff; stroke-width: 4px; }
.map-type { position: absolute; left: 20px; top: 20px; height: 80px; display: flex; font-size: 36px; line-height: 80px; text-align: center; background: #fff; border-radius: 4px; box-shadow: 0 2px 8px rgba(0, 0, 0, .3); }
.type-map { width: 139px; color: #000; font-weight: 500; }
.type-sat { width: 197px; color: #565656; box-shadow: -2px 0 3px rgba(0, 0, 0, .06); }
.control { position: absolute; right: 20px; width: 80px; height: 80px; background: #fff; border-radius: 4px; box-shadow: 0 2px 8px rgba(0, 0, 0, .3); }
.control svg { display: block; width: 100%; height: 100%; }
.fullscreen { top: 20px; }
.pegman { top: 479px; }
.zoom { top: 623px; height: 162px; }
.legal { position: absolute; right: 0; bottom: 0; height: 28px; width: 772px; padding: 1px 0 0 10px; display: flex; gap: 24px; background: rgba(245, 245, 245, .7); color: #000; font-size: 20px; line-height: 28px; white-space: nowrap; }
```
